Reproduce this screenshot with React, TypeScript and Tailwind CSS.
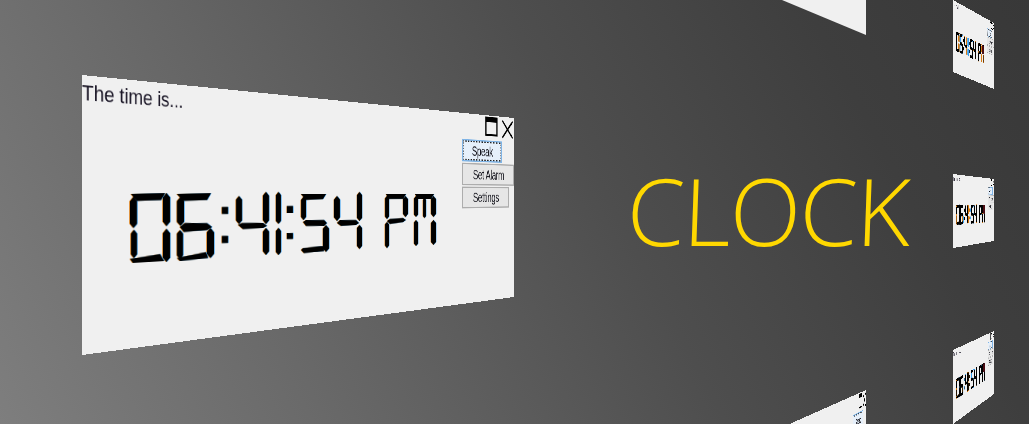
import React from "react";

type Pt = [number, number];
type Quad = [Pt, Pt, Pt, Pt];

const W = 770;
const H = 280;
const MAIN: Quad = [[82, 75], [514, 118], [514, 297], [82, 355]];

function homography(q: Quad) {
  const [[x0, y0], [x1, y1], [x2, y2], [x3, y3]] = q;
  const sx = x0 - x1 + x2 - x3;
  const sy = y0 - y1 + y2 - y3;
  const dx1 = x1 - x2;
  const dx2 = x3 - x2;
  const dy1 = y1 - y2;
  const dy2 = y3 - y2;
  const den = dx1 * dy2 - dx2 * dy1;
  const g = (sx * dy2 - dx2 * sy) / den;
  const h = (dx1 * sy - sx * dy1) / den;
  return {
    a: (x1 - x0 + g * x1) / W,
    b: (x3 - x0 + h * x3) / H,
    c: x0,
    d: (y1 - y0 + g * y1) / W,
    e: (y3 - y0 + h * y3) / H,
    f: y0,
    g: g / W,
    h: h / H,
  };
}

function cssMatrix(q: Quad) {
  const m = homography(q);
  return `matrix3d(${[m.a, m.d, 0, m.g, m.b, m.e, 0, m.h, 0, 0, 1, 0, m.c, m.f, 0, 1].join(",")})`;
}

function toLocal([x, y]: Pt): Pt {
  const { a, b, c, d, e, f, g, h } = homography(MAIN);
  const A = e - f * h;
  const B = c * h - b;
  const C = b * f - c * e;
  const D = f * g - d;
  const E = a - c * g;
  const F = c * d - a * f;
  const G = d * h - e * g;
  const I = b * g - a * h;
  const J = a * e - b * d;
  const ww = G * x + I * y + J;
  return [(A * x + B * y + C) / ww, (D * x + E * y + F) / ww];
}

function v(x0: number, x1: number, y0: number, y1: number): Pt[] {
  const m = (x0 + x1) / 2;
  const k = (x1 - x0) * 0.6;
  return [[m, y0], [x1, y0 + k], [x1, y1 - k], [m, y1], [x0, y1 - k], [x0, y0 + k]];
}

const SEGMENTS: Pt[][] = [
  // 0
  [[131, 194], [165, 193], [161, 200], [137, 201]],
  v(130, 137, 197, 228),
  v(131, 137, 230, 258),
  v(163, 170, 193, 226),
  v(163, 170, 229, 262),
  [[130, 259], [160, 254], [164, 261], [133, 263]],
  // 6
  [[177, 194], [211, 193], [207, 200], [183, 201]],
  v(177, 184, 197, 226),
  [[180, 227], [185, 223], [207, 223], [212, 227], [207, 230], [184, 232]],
  v(177, 183, 230, 259),
  v(207, 214, 228, 258),
  [[177, 258], [206, 252], [208, 258], [180, 261]],
  // colon
  [[222, 207], [228, 207], [228, 214], [222, 214]],
  [[222, 236], [228, 236], [228, 243], [222, 243]],
  // 4
  v(236, 242, 196, 224),
  [[238, 225], [242, 223], [263, 223], [267, 226], [263, 228], [243, 229]],
  v(263, 269, 192, 224),
  v(263, 269, 228, 255),
  // 1
  v(276, 281, 192, 224),
  v(276, 281, 228, 255),
  // colon
  [[287, 206], [293, 206], [293, 213], [287, 213]],
  [[287, 233], [293, 233], [293, 239], [287, 239]],
  // 5
  [[301, 194], [326, 194], [323, 199], [306, 200]],
  v(301, 306, 197, 220),
  [[303, 222], [306, 220], [324, 220], [327, 223], [324, 226], [306, 226]],
  v(323, 329, 225, 252),
  [[301, 250], [303, 248], [323, 246], [324, 251], [304, 253]],
  // 4
  v(334, 340, 196, 221),
  [[337, 223], [340, 220], [356, 220], [359, 223], [356, 225], [341, 226]],
  v(357, 362, 192, 221),
  v(357, 362, 225, 249),
  // P
  [[386, 194], [406, 194], [403, 199], [389, 199]],
  v(385, 389, 196, 219),
  v(385, 389, 222, 248),
  v(403, 408, 196, 217),
  [[387, 221], [390, 219], [403, 218], [406, 220], [403, 222], [390, 224]],
  // M
  [[415, 194], [434, 194], [431, 199], [418, 199]],
  v(414, 418, 196, 217),
  v(414, 418, 220, 246),
  v(431, 436, 196, 217),
  v(431, 436, 220, 245),
  v(423, 426, 198, 218),
];

const toPath = (polys: Pt[][]) =>
  polys
    .map(
      (poly) =>
        "M" +
        poly
          .map((p) => toLocal(p))
          .map(([x, y]) => `${x.toFixed(1)} ${y.toFixed(1)}`)
          .join("L") +
        "Z",
    )
    .join("");

const PATH = toPath(SEGMENTS);
const BLOB = toPath([[[418, 194], [438, 194], [438, 219], [418, 219]]]);

function ClockDigits({ small }: { small?: boolean }) {
  const stroke = small ? 4 : 0;
  const shift = small ? 3 : 0.9;
  return (
    <svg className="absolute inset-0" width={W} height={H} viewBox={`0 0 ${W} ${H}`}>
      <path d={PATH} fill="#d97a10" stroke="#d97a10" strokeWidth={stroke} transform={`translate(${-shift} 0)`} />
      <path d={PATH} fill="#3aa0f0" stroke="#3aa0f0" strokeWidth={stroke} transform={`translate(${shift} 0)`} />
      <path d={PATH} fill="#000" stroke="#000" strokeWidth={stroke} />
      {small && <path d={BLOB} fill="#4a0c12" />}
    </svg>
  );
}

function Controls() {
  return (
    <div className="relative flex w-[136px] flex-col items-start">
      <div className="flex h-[38px] w-full items-start justify-end gap-[12px] pr-[3px] pt-[2px]">
        <div className="h-[29px] w-[32px] border-[3px] border-t-[8px] border-black" />
        <svg width="30" height="28" viewBox="0 0 30 28" className="mt-[3px]">
          <path d="M1 1 L29 27 M29 1 L1 27" stroke="#000" strokeWidth="3" fill="none" />
        </svg>
      </div>
      <div className="flex h-[33px] w-[103px] items-center justify-center border-2 border-[#7fb4e6] bg-[#e6f0fb] text-[20px] leading-none tracking-[-0.6px] text-[#101018] outline-dotted outline-2 -outline-offset-4 outline-[#222]">
        Speak
      </div>
      <div className="mt-[2px] flex h-[33px] w-[136px] items-center justify-center border-2 border-[#adadad] bg-[#e6e6e6] text-[20px] leading-none tracking-[-0.6px] text-[#101018]">
        Set Alarm
      </div>
      <div className="mt-[2px] flex h-[32px] w-[122px] items-center justify-center border-2 border-[#adadad] bg-[#e6e6e6] text-[20px] leading-none tracking-[-0.6px] text-[#101018]">
        Settings
      </div>
    </div>
  );
}

type Kind = "full" | "small" | "controls" | "blank";

function Panel({ quad, kind }: { quad: Quad; kind: Kind }) {
  const hasBody = kind === "full" || kind === "small";
  return (
    <div
      className="absolute left-0 top-0 flex h-[280px] w-[770px] origin-top-left justify-between bg-[#f0f0f0] font-['Liberation_Sans',sans-serif] text-[#1a1626]"
      style={{ transform: cssMatrix(quad) }}
    >
      {hasBody && <ClockDigits small={kind === "small"} />}
      {hasBody ? <div className="pt-[5px] text-[22px] leading-[26px]">The time is...</div> : <div />}
      {kind !== "blank" && <Controls />}
    </div>
  );
}

const PANELS: { quad: Quad; kind: Kind }[] = [
  { quad: MAIN, kind: "full" },
  { quad: [[758, -230], [866, -100], [866, 35], [758, -10]], kind: "blank" },
  { quad: [[758, 438], [866, 390], [866, 525], [758, 648]], kind: "controls" },
  { quad: [[953, 0], [994, 23], [994, 89], [953, 72]], kind: "small" },
  { quad: [[953, 174], [994, 179], [994, 241], [953, 248]], kind: "small" },
  { quad: [[953, 350], [994, 331], [994, 394], [953, 424]], kind: "small" },
];

export default function App() {
  return (
    <div className="relative h-[424px] w-[1029px] overflow-hidden bg-[linear-gradient(62deg,#7e7e7e_0%,#6a6a6a_25%,#4e4e4e_58%,#3e3e3e_82%,#383838_100%)]">
      {PANELS.map((p, i) => (
        <Panel key={i} quad={p.quad} kind={p.kind} />
      ))}
      <div className="absolute left-[627px] top-[147px] -skew-x-[2deg] font-['Open_Sans',sans-serif] text-[93px] font-light leading-[127px] tracking-[-1.2px] text-[#ffd800]">
        CLOCK
      </div>
    </div>
  );
}
